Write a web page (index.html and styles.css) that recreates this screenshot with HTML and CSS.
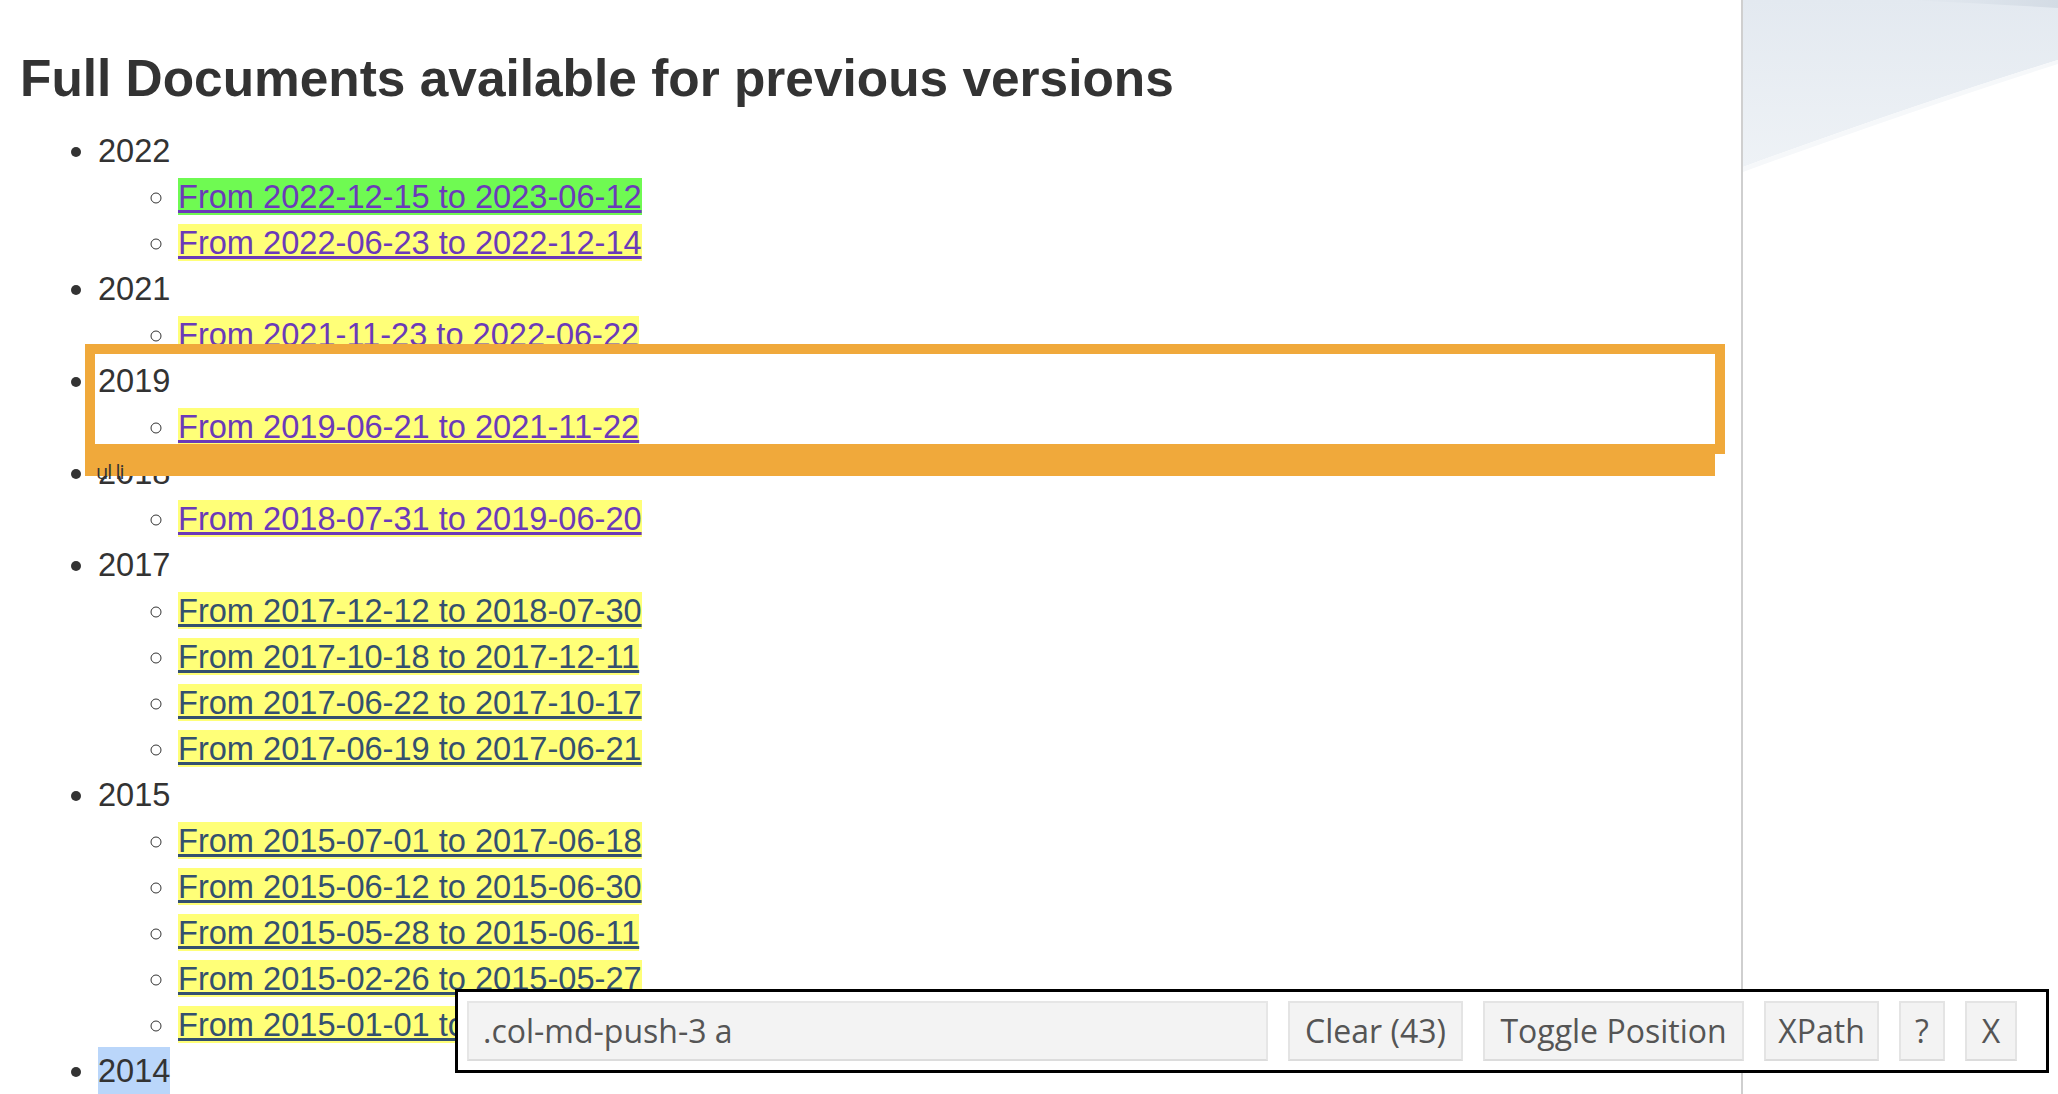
FILE: index.html
```html
<!DOCTYPE html>
<html>
<head>
<meta charset="utf-8">
<title>Full Documents</title>
<link rel="stylesheet" href="styles.css">
</head>
<body>
<div class="page">
  <main class="main">
    <h3 class="title">Full Documents available for previous versions</h3>
    <ul class="years">
      <li>2022
        <ul class="ranges">
          <li><a class="hit current visited" href="#">From 2022-12-15 to 2023-06-12</a></li>
          <li><a class="hit visited" href="#">From 2022-06-23 to 2022-12-14</a></li>
        </ul>
      </li>
      <li>2021
        <ul class="ranges">
          <li><a class="hit visited" href="#">From 2021-11-23 to 2022-06-22</a></li>
        </ul>
      </li>
      <li>2019
        <ul class="ranges">
          <li><a class="hit visited" href="#">From 2019-06-21 to 2021-11-22</a></li>
        </ul>
      </li>
      <li>2018
        <ul class="ranges">
          <li><a class="hit visited" href="#">From 2018-07-31 to 2019-06-20</a></li>
        </ul>
      </li>
      <li>2017
        <ul class="ranges">
          <li><a class="hit" href="#">From 2017-12-12 to 2018-07-30</a></li>
          <li><a class="hit" href="#">From 2017-10-18 to 2017-12-11</a></li>
          <li><a class="hit" href="#">From 2017-06-22 to 2017-10-17</a></li>
          <li><a class="hit" href="#">From 2017-06-19 to 2017-06-21</a></li>
        </ul>
      </li>
      <li>2015
        <ul class="ranges">
          <li><a class="hit" href="#">From 2015-07-01 to 2017-06-18</a></li>
          <li><a class="hit" href="#">From 2015-06-12 to 2015-06-30</a></li>
          <li><a class="hit" href="#">From 2015-05-28 to 2015-06-11</a></li>
          <li><a class="hit" href="#">From 2015-02-26 to 2015-05-27</a></li>
          <li><a class="hit" href="#">From 2015-01-01 to 2015-02-25</a></li>
        </ul>
      </li>
      <li><span class="selected">2014</span>
        <ul class="ranges">
          <li><a class="hit" href="#">From 2014-06-30 to 2014-12-31</a></li>
        </ul>
      </li>
    </ul>
  </main>
  <aside class="side">
    <svg class="side-art" viewBox="0 0 315 200" preserveAspectRatio="none" aria-hidden="true">
      <defs>
        <linearGradient id="sky" x1="0" y1="0" x2="0" y2="1">
          <stop offset="0" stop-color="#e3e9f0"/>
          <stop offset="1" stop-color="#eef2f6"/>
        </linearGradient>
        <linearGradient id="band" x1="0" y1="0" x2="1" y2="0">
          <stop offset="0" stop-color="#d6dee7" stop-opacity="0"/>
          <stop offset="1" stop-color="#d3dbe4"/>
        </linearGradient>
      </defs>
      <path d="M0 0 H315 V60 Q170 105 0 167 Z" fill="url(#sky)"/>
      <path d="M0 167 Q170 105 315 60 V64 Q170 110 0 172 Z" fill="#f6f8fa"/>
      <path d="M165 0 H315 V8 Q250 4 165 0 Z" fill="url(#band)"/>
    </svg>
  </aside>
</div>

<div class="hl">
  <div class="hl-box"></div>
  <div class="hl-label">ul li</div>
</div>

<div class="toolbar">
  <div class="selector">.col-md-push-3 a</div>
  <button class="btn btn-clear">Clear (43)</button>
  <button class="btn btn-toggle">Toggle Position</button>
  <button class="btn btn-xpath">XPath</button>
  <button class="btn btn-help">?</button>
  <button class="btn btn-close">X</button>
</div>
</body>
</html>
```

FILE: styles.css
```css
html, body {
  margin: 0;
  padding: 0;
  background: #fff;
}

body {
  font-family: "Liberation Sans", Arial, Helvetica, sans-serif;
  color: #333;
}

.page {
  display: flex;
  min-height: 100vh;
}

.main {
  width: 1741px;
  flex: none;
  padding-left: 16px;
  box-sizing: border-box;
}

.side {
  flex: 1;
  border-left: 2px solid #cfcfcf;
  background: #fff;
}

.side-art {
  display: block;
  width: 100%;
  height: 200px;
}

.title {
  font-size: 51.4px;
  line-height: 57px;
  font-weight: 700;
  margin: 50px 0 21px 4px;
  color: #333;
}

.years {
  margin: 0;
  padding-left: 82px;
  font-size: 32.6px;
  line-height: 46px;
  list-style: disc;
}

.ranges {
  margin: 0;
  padding-left: 80px;
  list-style: circle;
}

.hit {
  background: #ffff78;
  color: #34506f;
  text-decoration: underline;
  text-decoration-thickness: 3px;
}

.hit.visited {
  color: #6b3ab9;
}

.hit.current {
  background: #6ffa52;
}

.selected {
  background: #bad6fa;
  padding: 5px 0;
}

/* element highlight overlay */
.hl {
  position: absolute;
  left: 85px;
  top: 344px;
  z-index: 5;
}

.hl-box {
  width: 1640px;
  height: 110px;
  border: 10px solid #f0a93b;
  box-sizing: border-box;
}

.hl-label {
  width: 1630px;
  height: 22px;
  background: #f0a93b;
  color: #333;
  font-family: "Open Sans", "Liberation Sans", sans-serif;
  font-size: 20px;
  line-height: 36px;
  padding-left: 11px;
  box-sizing: border-box;
  letter-spacing: -1px;
  overflow: visible;
  white-space: nowrap;
}

/* selector toolbar */
.toolbar {
  position: fixed;
  left: 455px;
  bottom: 21px;
  width: 1594px;
  height: 84px;
  box-sizing: border-box;
  border: 3px solid #000;
  background: #fff;
  padding: 9px;
  display: flex;
  gap: 20px;
  z-index: 10;
  font-family: "Open Sans", "Liberation Sans", sans-serif;
}

.selector {
  width: 801px;
  height: 60px;
  box-sizing: border-box;
  background: #f3f3f3;
  border: 2px solid #e6e6e6;
  border-bottom-color: #dcdcdc;
  color: #555;
  font-size: 32px;
  line-height: 56px;
  padding: 0 14px;
}

.btn {
  height: 60px;
  box-sizing: border-box;
  background: #f3f3f3;
  border: 2px solid #e4e4e4;
  border-bottom-color: #dcdcdc;
  color: #555;
  font-family: inherit;
  font-size: 32px;
  line-height: 56px;
  padding: 0;
  margin: 0;
  text-align: center;
  flex: none;
}

.btn-clear { width: 175px; }
.btn-toggle { width: 261px; }
.btn-xpath { width: 115px; }
.btn-help { width: 46px; }
.btn-close { width: 52px; }
```
